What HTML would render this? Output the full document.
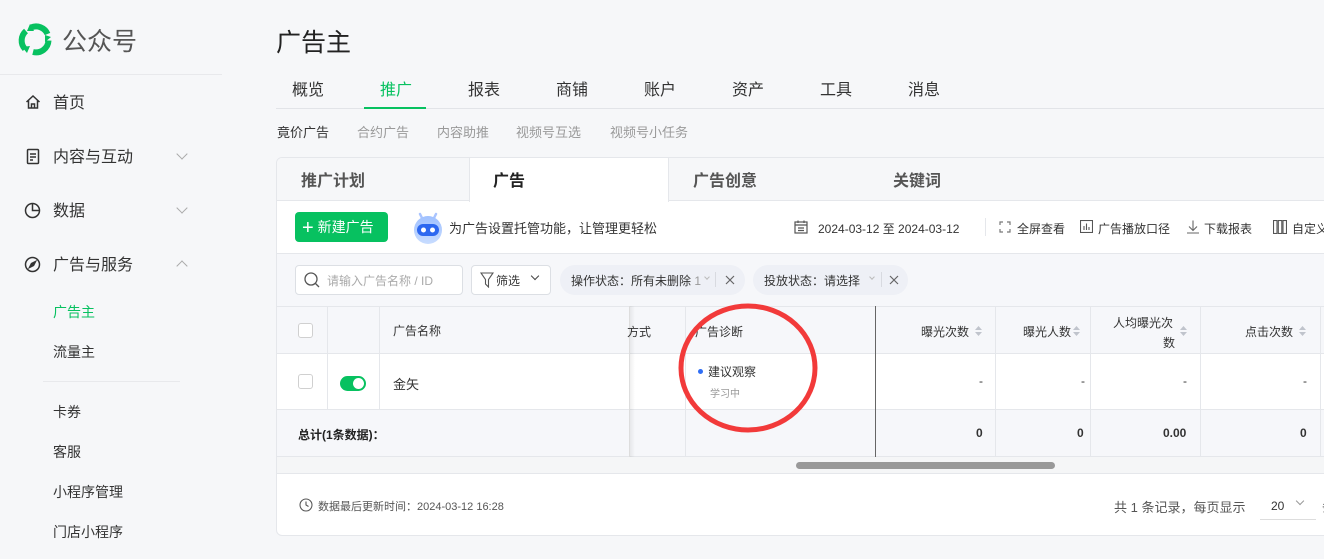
<!DOCTYPE html>
<html><head><meta charset="utf-8"><style>
*{margin:0;padding:0;box-sizing:border-box}
body{width:1324px;height:559px;overflow:hidden;background:#f6f7f9;font-family:"Liberation Sans","Noto Sans CJK SC",sans-serif;color:#333;position:relative}
.a{position:absolute;white-space:nowrap}
.nav{font-size:16px;color:#333}
.sub{font-size:14px;color:#333}
.chev{position:absolute;width:8px;height:8px;border-right:1.3px solid #aaa;border-bottom:1.3px solid #aaa}
.tab{font-size:16px;color:#333}
.st{font-size:13px;color:#999}
.card{position:absolute;left:276px;top:157px;width:1060px;height:379px;background:#fff;border:1px solid #e5e7eb;border-radius:6px;overflow:hidden}
.th{font-size:12px;color:#333}
.cb{position:absolute;width:15px;height:15px;border:1px solid #d0d0d0;border-radius:3px;background:#fff}
.vl{position:absolute;width:1px;background:#e5e7eb}
.sort{position:absolute;width:7px;height:12px}
</style></head><body>
<svg class="a" style="left:18px;top:22px" width="35" height="35" viewBox="0 0 35 35">
<g fill="none" stroke="#07c160" stroke-width="6" stroke-linecap="butt">
<path d="M7 27 A12.5 12.5 0 0 1 8 9"/><path d="M13 5.5 A12.5 12.5 0 0 1 29.5 12"/><path d="M30.5 18.5 A12.5 12.5 0 0 1 15 30"/></g>
<path d="M4 25 L12 24 L9 31Z M12 2 L16 9 L9 9Z M33 15 L27 20 L27 13Z" fill="#07c160"/></svg>
<div class="a" style="left:62px;top:22px;font-size:25px;color:#555">公众号</div>
<div class="a" style="left:0;top:74px;width:222px;height:1px;background:#e8e9ec"></div>
<svg class="a" style="left:25px;top:94px" width="16" height="16" viewBox="0 0 16 16" fill="none" stroke="#333" stroke-width="1.5"><path d="M1.5 8 L8 2 L14.5 8 M3.5 6.5 V14 H12.5 V6.5 M6.5 14 V10 H9.5 V14"/></svg>
<div class="a nav" style="left:53px;top:89px">首页</div>
<svg class="a" style="left:25px;top:148px" width="16" height="17" viewBox="0 0 16 17" fill="none" stroke="#333" stroke-width="1.5"><rect x="2.5" y="1.5" width="11" height="14" rx="1"/><path d="M5 6H11M5 9H11M5 12H8"/></svg>
<div class="a nav" style="left:53px;top:143px">内容与互动</div>
<div class="chev" style="left:178px;top:150px;transform:rotate(45deg)"></div>
<svg class="a" style="left:24px;top:202px" width="17" height="17" viewBox="0 0 17 17" fill="none" stroke="#333" stroke-width="1.5"><circle cx="8.5" cy="8.5" r="7"/><path d="M8.5 1.5V8.5H15.5"/></svg>
<div class="a nav" style="left:53px;top:197px">数据</div>
<div class="chev" style="left:178px;top:204px;transform:rotate(45deg)"></div>
<svg class="a" style="left:24px;top:256px" width="17" height="17" viewBox="0 0 17 17" fill="none" stroke="#333" stroke-width="1.5"><circle cx="8.5" cy="8.5" r="7"/><path d="M11.5 5.5L9.5 9.5L5.5 11.5L7.5 7.5Z" fill="#333"/></svg>
<div class="a nav" style="left:53px;top:251px">广告与服务</div>
<div class="chev" style="left:178px;top:262px;transform:rotate(225deg)"></div>
<div class="a sub" style="left:53px;top:302px;color:#07c160">广告主</div>
<div class="a sub" style="left:53px;top:342px">流量主</div>
<div class="a" style="left:43px;top:381px;width:137px;height:1px;background:#e8e9ec"></div>
<div class="a sub" style="left:53px;top:402px">卡券</div>
<div class="a sub" style="left:53px;top:442px">客服</div>
<div class="a sub" style="left:53px;top:482px">小程序管理</div>
<div class="a sub" style="left:53px;top:522px">门店小程序</div>
<div class="a" style="left:276px;top:23px;font-size:25px;color:#222">广告主</div>
<div class="a tab" style="left:292px;top:76px">概览</div>
<div class="a tab" style="left:380px;top:76px;color:#07c160">推广</div>
<div class="a tab" style="left:468px;top:76px">报表</div>
<div class="a tab" style="left:556px;top:76px">商铺</div>
<div class="a tab" style="left:644px;top:76px">账户</div>
<div class="a tab" style="left:732px;top:76px">资产</div>
<div class="a tab" style="left:820px;top:76px">工具</div>
<div class="a tab" style="left:908px;top:76px">消息</div>
<div class="a" style="left:276px;top:108px;width:1048px;height:1px;background:#e2e4e8"></div>
<div class="a" style="left:364px;top:107px;width:62px;height:2px;background:#07c160"></div>
<div class="a st" style="left:277px;top:122px;color:#333">竟价广告</div>
<div class="a st" style="left:357px;top:122px">合约广告</div>
<div class="a st" style="left:437px;top:122px">内容助推</div>
<div class="a st" style="left:516px;top:122px">视频号互选</div>
<div class="a st" style="left:610px;top:122px">视频号小任务</div>
<div class="card">
 <div class="a" style="left:0;top:0;width:1060px;height:43px;background:#f6f7f9;border-bottom:1px solid #e5e7eb"></div>
 <div class="a" style="left:192px;top:-5px;width:200px;height:49px;background:#fff;border:1px solid #e5e7eb;border-bottom:none;border-radius:6px 6px 0 0"></div>
 <div class="a" style="left:24px;top:9px;font-size:16px;font-weight:bold;color:#555">推广计划</div>
 <div class="a" style="left:216px;top:9px;font-size:16px;font-weight:bold;color:#222">广告</div>
 <div class="a" style="left:416px;top:9px;font-size:16px;font-weight:bold;color:#555">广告创意</div>
 <div class="a" style="left:616px;top:9px;font-size:16px;font-weight:bold;color:#555">关键词</div>
 <div class="a" style="left:18px;top:54px;width:93px;height:30px;background:#07c160;border-radius:4px;color:#fff;font-size:14px;line-height:30px;padding-left:7px"><span style="font-size:20px;font-weight:300;vertical-align:-2px">+</span> 新建广告</div>
 <svg class="a" style="left:133px;top:52px" width="36" height="36" viewBox="0 0 36 36"><defs><linearGradient id="g" x1="0" y1="0" x2="0" y2="1"><stop offset="0" stop-color="#9fc0ff"/><stop offset="1" stop-color="#c8dcff"/></linearGradient></defs><path d="M10 4 L13 10 M26 4 L23 10" stroke="#a9c4ff" stroke-width="2.5" stroke-linecap="round"/><circle cx="18" cy="20" r="14" fill="url(#g)"/><rect x="7" y="14" width="22" height="12" rx="6" fill="#2d68f0"/><circle cx="13.5" cy="20" r="2.5" fill="#fff"/><circle cx="22.5" cy="20" r="2.5" fill="#fff"/></svg>
 <div class="a" style="left:172px;top:60px;font-size:13px;color:#333">为广告设置托管功能，让管理更轻松</div>
 <svg class="a" style="left:517px;top:62px" width="14" height="14" viewBox="0 0 14 14" fill="none" stroke="#555" stroke-width="1.2"><rect x="1" y="2" width="12" height="11"/><path d="M4 0.5V3M10 0.5V3M1 5H13M4 8H10M4 10.5H10"/></svg>
 <div class="a" style="left:541px;top:62px;font-size:12px;color:#333">2024-03-12 至 2024-03-12</div>
 <div class="a" style="left:708px;top:60px;width:1px;height:18px;background:#e5e7eb"></div>
 <svg class="a" style="left:722px;top:63px" width="12" height="12" viewBox="0 0 12 12" fill="none" stroke="#777" stroke-width="1.2"><path d="M1 4V1H4M8 1H11V4M11 8V11H8M4 11H1V8"/></svg>
 <div class="a" style="left:740px;top:62px;font-size:12px">全屏查看</div>
 <svg class="a" style="left:803px;top:62px" width="13" height="13" viewBox="0 0 13 13" fill="none" stroke="#555" stroke-width="1.1"><rect x="0.5" y="0.5" width="12" height="12"/><path d="M4 10V6M6.5 10V3.5M9 10V7"/></svg>
 <div class="a" style="left:821px;top:62px;font-size:12px">广告播放口径</div>
 <svg class="a" style="left:909px;top:62px" width="14" height="14" viewBox="0 0 14 14" fill="none" stroke="#666" stroke-width="1.1"><path d="M7 0.5V10M3 6.5L7 10.5L11 6.5M1 13H13"/></svg>
 <div class="a" style="left:927px;top:62px;font-size:12px">下载报表</div>
 <svg class="a" style="left:996px;top:62px" width="14" height="14" viewBox="0 0 14 14" fill="none" stroke="#555" stroke-width="1.1"><rect x="0.5" y="0.5" width="3.5" height="13"/><rect x="5.3" y="0.5" width="3.5" height="13"/><rect x="10" y="0.5" width="3.5" height="13"/></svg>
 <div class="a" style="left:1015px;top:62px;font-size:12px">自定义</div>
 <div class="a" style="left:0;top:95px;width:1060px;height:53px;background:#f6f7fa;border-top:1px solid #e5e7eb"></div>
 <div class="a" style="left:18px;top:107px;width:168px;height:30px;background:#fff;border:1px solid #dcdfe4;border-radius:4px"></div>
 <svg class="a" style="left:27px;top:114px" width="16" height="17" viewBox="0 0 16 17" fill="none" stroke="#555" stroke-width="1.3"><circle cx="7" cy="7" r="6"/><path d="M11.5 11.5L15 15"/></svg>
 <div class="a" style="left:50px;top:114px;font-size:12px;color:#aaa">请输入广告名称 / ID</div>
 <div class="a" style="left:194px;top:107px;width:80px;height:30px;background:#fff;border:1px solid #dcdfe4;border-radius:4px"></div>
 <svg class="a" style="left:203px;top:114px" width="14" height="16" viewBox="0 0 14 16" fill="none" stroke="#555" stroke-width="1.1"><path d="M1 1H13L8.5 7.5V15L5.5 12V7.5Z"/></svg>
 <div class="a" style="left:219px;top:114px;font-size:12px">筛选</div>
 <div class="chev" style="left:255px;top:115px;width:6px;height:6px;border-color:#444;transform:rotate(45deg)"></div>
 <div class="a" style="left:283px;top:107px;width:185px;height:30px;background:#eef0f6;border-radius:15px"></div>
 <div class="a" style="left:294px;top:114px;font-size:12px">操作状态：所有未删除 <span style="color:#999">1</span></div>
 <div class="chev" style="left:428px;top:117px;width:4px;height:4px;border-color:#bbb;transform:rotate(45deg)"></div>
 <div class="a" style="left:438px;top:114px;width:1px;height:15px;background:#d8dae0"></div>
 <svg class="a" style="left:448px;top:117px" width="10" height="10" viewBox="0 0 10 10" stroke="#666" stroke-width="1.2"><path d="M1 1L9 9M9 1L1 9"/></svg>
 <div class="a" style="left:476px;top:107px;width:155px;height:30px;background:#eef0f6;border-radius:15px"></div>
 <div class="a" style="left:487px;top:114px;font-size:12px">投放状态：请选择</div>
 <div class="chev" style="left:593px;top:117px;width:4px;height:4px;border-color:#bbb;transform:rotate(45deg)"></div>
 <div class="a" style="left:604px;top:114px;width:1px;height:15px;background:#d8dae0"></div>
 <svg class="a" style="left:612px;top:117px" width="10" height="10" viewBox="0 0 10 10" stroke="#666" stroke-width="1.2"><path d="M1 1L9 9M9 1L1 9"/></svg>
 <div class="a" style="left:0;top:148px;width:1060px;height:48px;background:#f6f7fa;border-top:1px solid #e5e7eb;border-bottom:1px solid #e5e7eb"></div>
 <div class="a" style="left:0;top:196px;width:1060px;height:55px;background:#fff"></div>
 <div class="a" style="left:0;top:251px;width:1060px;height:48px;background:#f6f7fa;border-top:1px solid #e5e7eb;border-bottom:1px solid #e5e7eb"></div>
 <div class="a" style="left:0;top:299px;width:1060px;height:17px;background:#f5f6f7;border-bottom:1px solid #e5e7eb"></div>
 <div class="a" style="left:519px;top:304px;width:259px;height:7px;background:#999;border-radius:4px"></div>
 <div class="vl" style="left:50px;top:148px;height:103px"></div>
 <div class="vl" style="left:102px;top:148px;height:103px"></div>
 <div class="a" style="left:352px;top:148px;width:6px;height:151px;background:linear-gradient(90deg,rgba(0,0,0,.08),rgba(0,0,0,0))"></div>
 <div class="vl" style="left:352px;top:148px;height:151px;background:#ddd"></div>
 <div class="vl" style="left:408px;top:148px;height:151px"></div>
 <div class="vl" style="left:598px;top:148px;height:151px;background:#666"></div>
 <div class="vl" style="left:718px;top:148px;height:151px"></div>
 <div class="vl" style="left:813px;top:148px;height:151px"></div>
 <div class="vl" style="left:923px;top:148px;height:151px"></div>
 <div class="vl" style="left:1043px;top:148px;height:151px"></div>
 <div class="cb" style="left:21px;top:165px"></div>
 <div class="cb" style="left:21px;top:216px"></div>
 <div class="a" style="left:63px;top:218px;width:26px;height:15px;border-radius:8px;background:#07c160"><div style="position:absolute;right:2px;top:2px;width:11px;height:11px;border-radius:50%;background:#fff"></div></div>
 <div class="a th" style="left:116px;top:164px">广告名称</div>
 <div class="a th" style="left:116px;top:216px;font-size:13px">金矢</div>
 <div class="a th" style="left:350px;top:165px">方式</div>
 <div class="a th" style="left:418px;top:165px">广告诊断</div>
 <div class="a" style="left:421px;top:211px;width:5px;height:5px;border-radius:50%;background:#2f6ef5"></div>
 <div class="a th" style="left:431px;top:205px">建议观察</div>
 <div class="a" style="left:433px;top:227px;font-size:10px;color:#999">学习中</div>
 <div class="a" style="left:21px;top:268px;font-size:12px;font-weight:bold;color:#222">总计(1条数据)：</div>
 <div class="a th" style="left:644px;top:165px">曝光次数</div>
 <div class="a th" style="left:746px;top:165px">曝光人数</div>
 <div class="a th" style="left:836px;top:156px">人均曝光次</div>
 <div class="a th" style="left:886px;top:176px">数</div>
 <div class="a th" style="left:968px;top:165px">点击次数</div>
 <svg class="sort" style="left:698px;top:167px" viewBox="0 0 7 12"><path d="M0 5L3.5 1L7 5ZM0 7L3.5 11L7 7Z" fill="#c0c4cc"/></svg>
 <svg class="sort" style="left:796px;top:167px" viewBox="0 0 7 12"><path d="M0 5L3.5 1L7 5ZM0 7L3.5 11L7 7Z" fill="#c0c4cc"/></svg>
 <svg class="sort" style="left:903px;top:167px" viewBox="0 0 7 12"><path d="M0 5L3.5 1L7 5ZM0 7L3.5 11L7 7Z" fill="#c0c4cc"/></svg>
 <svg class="sort" style="left:1022px;top:167px" viewBox="0 0 7 12"><path d="M0 5L3.5 1L7 5ZM0 7L3.5 11L7 7Z" fill="#c0c4cc"/></svg>
 <div class="a th" style="left:702px;top:216px">-</div>
 <div class="a th" style="left:804px;top:216px">-</div>
 <div class="a th" style="left:906px;top:216px">-</div>
 <div class="a th" style="left:1026px;top:216px">-</div>
 <div class="a" style="left:699px;top:268px;font-size:12px;font-weight:bold">0</div>
 <div class="a" style="left:800px;top:268px;font-size:12px;font-weight:bold">0</div>
 <div class="a" style="left:886px;top:268px;font-size:12px;font-weight:bold">0.00</div>
 <div class="a" style="left:1023px;top:268px;font-size:12px;font-weight:bold">0</div>
 <svg class="a" style="left:22px;top:340px" width="14" height="14" viewBox="0 0 14 14" fill="none" stroke="#555" stroke-width="1.1"><circle cx="7" cy="7" r="6"/><path d="M7 3.5V7L9.5 8.5"/></svg>
 <div class="a" style="left:41px;top:340px;font-size:11px;color:#555">数据最后更新时间：2024-03-12 16:28</div>
 <div class="a" style="left:837px;top:339px;font-size:13px;color:#555">共 1 条记录，每页显示</div>
 <div class="a" style="left:994px;top:341px;font-size:12px;color:#333">20</div>
 <div class="chev" style="left:1020px;top:340px;width:6px;height:6px;border-color:#999;transform:rotate(45deg)"></div>
 <div class="a" style="left:983px;top:361px;width:56px;height:1px;background:#ddd"></div>
 <div class="a" style="left:1045px;top:339px;font-size:13px;color:#555">条</div>
</div>
<svg class="a" style="left:0;top:0" width="1324" height="559"><ellipse cx="748" cy="368" rx="67" ry="62" fill="none" stroke="#f23a3a" stroke-width="5"/></svg>
</body></html>
